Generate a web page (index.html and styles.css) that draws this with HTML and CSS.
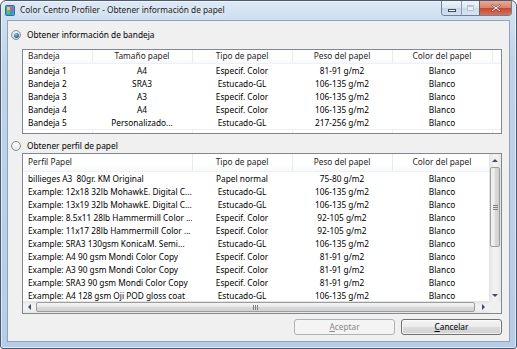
FILE: index.html
```html
<!DOCTYPE html>
<html lang="es">
<head>
  <meta charset="UTF-8" />
  <title>Color Centro Profiler - Obtener información de papel</title>
  <link rel="stylesheet" href="styles.css">
</head>
<body>
  <div class="window">
    <div class="titlebar">
      <svg class="app-icon" width="10" height="11" viewBox="0 0 10 11">
        <rect x="0.5" y="0.5" width="9" height="10" rx="1" fill="#4a9bc9" stroke="#2f6f96" />
        <rect x="2" y="2" width="6" height="7" fill="#e8f4fb" />
        <rect x="2" y="2" width="3" height="3" fill="#f2c94c" />
        <rect x="5" y="2" width="3" height="3" fill="#d9538f" />
        <rect x="2" y="5" width="3" height="4" fill="#5bbf6a" />
        <rect x="5" y="5" width="3" height="4" fill="#3d8fd6" />
      </svg>
      <span class="title">Color Centro Profiler - Obtener información de papel</span>
      <div class="caption-buttons">
        <span class="cap cap-min"><i></i></span>
        <span class="cap cap-max"><i></i></span>
        <span class="cap cap-close">
          <svg width="10" height="8" viewBox="0 0 10 8">
            <path d="M1.5 0.5 L5 3 L8.5 0.5 L9.5 1.5 L6.3 4 L9.5 6.5 L8.5 7.5 L5 5 L1.5 7.5 L0.5 6.5 L3.7 4 L0.5 1.5 Z" fill="#fff" stroke="#5a1a10" stroke-width="0.6" />
          </svg>
        </span>
      </div>
    </div>

    <div class="client">
      <label class="radio-row">
        <span class="radio checked"></span>Obtener información de bandeja
      </label>

      <div class="list list-trays">
        <table>
          <colgroup>
            <col class="c-tray"><col class="c-std"><col class="c-std"><col class="c-std"><col class="c-std"><col class="c-rest">
          </colgroup>
          <thead>
            <tr>
              <th class="left">Bandeja</th>
              <th>Tamaño papel</th>
              <th>Tipo de papel</th>
              <th>Peso del papel</th>
              <th>Color del papel</th>
              <th></th>
            </tr>
          </thead>
          <tbody>
            <tr><td class="left">Bandeja 1</td><td>A4</td><td>Especif. Color</td><td>81-91 g/m2</td><td>Blanco</td><td></td></tr>
            <tr><td class="left">Bandeja 2</td><td>SRA3</td><td>Estucado-GL</td><td>106-135 g/m2</td><td>Blanco</td><td></td></tr>
            <tr><td class="left">Bandeja 3</td><td>A3</td><td>Especif. Color</td><td>106-135 g/m2</td><td>Blanco</td><td></td></tr>
            <tr><td class="left">Bandeja 4</td><td>A4</td><td>Especif. Color</td><td>106-135 g/m2</td><td>Blanco</td><td></td></tr>
            <tr><td class="left">Bandeja 5</td><td>Personalizado...</td><td>Estucado-GL</td><td>217-256 g/m2</td><td>Blanco</td><td></td></tr>
            <tr class="filler"><td></td><td></td><td></td><td></td><td></td><td></td></tr>
          </tbody>
        </table>
      </div>

      <label class="radio-row second">
        <span class="radio"></span>Obtener perfil de papel
      </label>

      <div class="list list-profiles">
        <div class="list-main">
          <div class="view">
            <table>
              <colgroup>
                <col class="c-name"><col class="c-std"><col class="c-std"><col class="c-std"><col class="c-rest">
              </colgroup>
              <thead>
                <tr>
                  <th class="left">Perfil Papel</th>
                  <th>Tipo de papel</th>
                  <th>Peso del papel</th>
                  <th>Color del papel</th>
                  <th></th>
                </tr>
              </thead>
              <tbody>
                <tr><td class="left">billieges A3&nbsp; 80gr. KM Original</td><td>Papel normal</td><td>75-80 g/m2</td><td>Blanco</td><td></td></tr>
                <tr><td class="left">Example: 12x18 32lb MohawkE. Digital C...</td><td>Estucado-GL</td><td>106-135 g/m2</td><td>Blanco</td><td></td></tr>
                <tr><td class="left">Example: 13x19 32lb MohawkE. Digital C...</td><td>Estucado-GL</td><td>106-135 g/m2</td><td>Blanco</td><td></td></tr>
                <tr><td class="left">Example: 8.5x11 28lb Hammermill Color ...</td><td>Especif. Color</td><td>92-105 g/m2</td><td>Blanco</td><td></td></tr>
                <tr><td class="left">Example: 11x17 28lb Hammermill Color ...</td><td>Especif. Color</td><td>92-105 g/m2</td><td>Blanco</td><td></td></tr>
                <tr><td class="left">Example: SRA3 130gsm KonicaM. Semi...</td><td>Estucado-GL</td><td>106-135 g/m2</td><td>Blanco</td><td></td></tr>
                <tr><td class="left">Example: A4 90 gsm Mondi Color Copy</td><td>Especif. Color</td><td>81-91 g/m2</td><td>Blanco</td><td></td></tr>
                <tr><td class="left">Example: A3 90 gsm Mondi Color Copy</td><td>Especif. Color</td><td>81-91 g/m2</td><td>Blanco</td><td></td></tr>
                <tr><td class="left">Example: SRA3 90 gsm Mondi Color Copy</td><td>Especif. Color</td><td>81-91 g/m2</td><td>Blanco</td><td></td></tr>
                <tr><td class="left">Example: A4 128 gsm Oji POD gloss coat</td><td>Estucado-GL</td><td>106-135 g/m2</td><td>Blanco</td><td></td></tr>
              </tbody>
            </table>
          </div>
          <div class="vscroll">
            <span class="arrow up"></span>
            <div class="track">
              <div class="thumb"><span class="grip"></span></div>
            </div>
            <span class="arrow down"></span>
          </div>
        </div>
        <div class="hscroll-row">
          <div class="hscroll">
            <span class="arrow left"></span>
            <div class="track">
              <div class="thumb"><span class="grip"></span></div>
            </div>
            <span class="arrow right"></span>
          </div>
          <div class="corner"></div>
        </div>
      </div>

      <div class="buttons">
        <button class="btn" disabled><u>A</u>ceptar</button>
        <button class="btn"><u>C</u>ancelar</button>
      </div>
    </div>
  </div>
</body>
</html>
```

FILE: styles.css
```css
* {
  box-sizing: border-box;
}

body {
  margin: 0;
  background: #ffffff;
  font-family: "Noto Sans", "Liberation Sans", sans-serif;
  font-size: 8.3px;
  color: #000;
}

.window {
  width: 517px;
  height: 349px;
  border: 1px solid #4b5a6d;
  border-radius: 6px 6px 3px 3px;
  background: linear-gradient(180deg, #dde8f4 0px, #cfdff0 18px, #bfd4eb 60px, #b5cde8 100%);
  box-shadow: inset 0 0 0 1px rgba(255,255,255,0.55);
  overflow: hidden;
}

/* title bar */
.titlebar {
  height: 19px;
  display: flex;
  align-items: flex-start;
  padding-left: 4px;
}

.app-icon {
  margin-top: 4px;
  flex: none;
}

.title {
  margin-left: 5px;
  margin-top: 3px;
  line-height: 12px;
  color: #1b1b1b;
  white-space: nowrap;
  text-shadow: 0 0 6px rgba(255,255,255,0.9);
}

.caption-buttons {
  margin-left: auto;
  margin-right: 4px;
  display: flex;
  height: 15px;
  border: 1px solid #6f8098;
  border-top: none;
  border-radius: 0 0 4px 4px;
  overflow: hidden;
}

.cap {
  display: flex;
  align-items: center;
  justify-content: center;
  height: 100%;
}

.cap-min {
  width: 20px;
  border-right: 1px solid #8c9cb2;
  background: linear-gradient(180deg, #eef3f9 0%, #d9e4f1 50%, #c4d5e9 50%, #d3e1f0 100%);
}

.cap-min i {
  width: 8px;
  height: 3px;
  margin-top: 5px;
  background: #fff;
  border: 1px solid #3d4b5e;
}

.cap-max {
  width: 18px;
  border-right: 1px solid #7c5b5a;
  background: linear-gradient(180deg, #eef3f9 0%, #dde7f2 50%, #cbdaeb 50%, #d7e3f1 100%);
}

.cap-max i {
  width: 7px;
  height: 6px;
  border: 1px solid #b8c4d3;
  border-top-width: 2px;
  background: #e9eff6;
}

.cap-close {
  width: 31px;
  background: linear-gradient(180deg, #e9a99a 0%, #d9806c 50%, #c7472f 50%, #d7705a 100%);
}

/* client area */
.client {
  margin: 0 6px;
  width: 503px;
  height: 322px;
  border: 1px solid #8fa3bc;
  background: #f0f0f0;
  padding-top: 8px;
}

.radio-row {
  display: flex;
  align-items: center;
  height: 12px;
  padding-left: 3px;
  line-height: 12px;
  color: #000;
}

.radio-row.second {
  margin-top: 6px;
}

.radio {
  width: 10px;
  height: 10px;
  margin-right: 6px;
  border-radius: 50%;
  border: 1px solid #8b8f94;
  background: radial-gradient(circle at 50% 35%, #ffffff 0%, #eeeeee 55%, #d6d6d6 100%);
  display: flex;
  align-items: center;
  justify-content: center;
}

.radio.checked {
  background: radial-gradient(circle at 50% 35%, #f4f8fc 0%, #d9e3ee 60%, #b9c7d6 100%);
}

.radio.checked::after {
  content: "";
  width: 5px;
  height: 5px;
  border-radius: 50%;
  background: radial-gradient(circle at 40% 35%, #8fd0f5 0%, #2a6fa8 55%, #133f66 100%);
}

/* list views */
.list {
  width: 480px;
  margin-left: 14px;
  border: 1px solid #828790;
  background: #fff;
  overflow: hidden;
}

.list-trays {
  margin-top: 8px;
  height: 85px;
}

.list-profiles {
  margin-top: 1px;
  height: 161px;
}

.list table {
  border-collapse: collapse;
  table-layout: fixed;
}

.list-trays table {
  width: 478px;
  height: 83px;
}

.list th,
.list td {
  padding: 0 5px;
  font-weight: normal;
  text-align: center;
  white-space: nowrap;
  overflow: hidden;
  line-height: 13px;
  height: 13px;
}

.list .left {
  text-align: left;
}

.list th {
  color: #1e1e1e;
  background: linear-gradient(180deg, #ffffff 0%, #ffffff 60%, #f7f8fa 100%);
  border-right: 1px solid #e8ebee;
  border-bottom: 1px solid #eff1f3;
}

.list-trays th {
  height: 13px;
  line-height: 12px;
}

.list-profiles th {
  height: 17px;
  line-height: 16px;
}

.list th:last-child {
  border-right: none;
}

.list .filler td {
  height: auto;
  border-top: 1px solid #efefef;
  border-right: 1px solid #efefef;
}

col.c-tray { width: 69px; }
col.c-name { width: 169px; }
col.c-std  { width: 100px; }
col.c-rest { width: 9px; }

.list-main {
  display: flex;
  height: 147px;
}

.view {
  width: 466px;
  overflow: hidden;
}

.list-profiles table {
  width: 478px;
}

/* scroll bars */
.vscroll {
  width: 12px;
  display: flex;
  flex-direction: column;
  background: linear-gradient(90deg, #e3e3e3 0%, #f2f2f2 40%, #f2f2f2 60%, #e6e6e6 100%);
}

.vscroll .track {
  flex: 1;
  padding-top: 1px;
}

.vscroll .thumb {
  height: 80px;
  margin: 0 1px;
}

.hscroll-row {
  display: flex;
  height: 12px;
}

.hscroll {
  width: 466px;
  display: flex;
  background: linear-gradient(180deg, #e3e3e3 0%, #f2f2f2 40%, #f2f2f2 60%, #e6e6e6 100%);
}

.hscroll .track {
  flex: 1;
  padding-left: 1px;
}

.hscroll .thumb {
  width: 439px;
  height: 10px;
  margin-top: 1px;
}

.thumb {
  border: 1px solid #9c9c9c;
  border-radius: 2px;
  background: linear-gradient(90deg, #f4f4f4 0%, #e8e8e8 50%, #d9d9d9 51%, #d2d2d2 100%);
  display: flex;
  align-items: center;
  justify-content: center;
}

.hscroll .thumb {
  background: linear-gradient(180deg, #f4f4f4 0%, #e8e8e8 50%, #d9d9d9 51%, #d2d2d2 100%);
}

.vscroll .grip {
  width: 5px;
  height: 5px;
  background: repeating-linear-gradient(180deg, #7f7f7f 0px, #7f7f7f 1px, transparent 1px, transparent 2px);
}

.hscroll .grip {
  width: 5px;
  height: 5px;
  background: repeating-linear-gradient(90deg, #7f7f7f 0px, #7f7f7f 1px, transparent 1px, transparent 2px);
}

.corner {
  width: 12px;
  background: #f0f0f0;
}

.arrow {
  width: 12px;
  height: 12px;
  flex: none;
  display: flex;
  align-items: center;
  justify-content: center;
}

.arrow::after {
  content: "";
  width: 0;
  height: 0;
  border: 3px solid transparent;
}

.arrow.up::after    { border-bottom-color: #3f4b5e; border-top-width: 0; }
.arrow.down::after  { border-top-color: #3f4b5e; border-bottom-width: 0; }
.arrow.left::after  { border-right-color: #3f4b5e; border-left-width: 0; }
.arrow.right::after { border-left-color: #3f4b5e; border-right-width: 0; }

/* buttons */
.buttons {
  width: 480px;
  margin: 5px 0 0 14px;
  display: flex;
  justify-content: flex-end;
  gap: 6px;
}

.btn {
  width: 101px;
  height: 16px;
  padding: 0;
  font-family: inherit;
  font-size: 8.3px;
  line-height: 14px;
  color: #000;
  border: 1px solid #707070;
  border-radius: 3px;
  background: linear-gradient(180deg, #f3f3f3 0%, #ececec 50%, #dddddd 50%, #d0d0d0 100%);
  box-shadow: inset 0 0 0 1px rgba(255,255,255,0.7);
}

.btn:disabled {
  color: #8a8a8a;
  border-color: #adb2b5;
  background: #f4f4f4;
  box-shadow: none;
}

.btn u {
  text-decoration-thickness: 1px;
}
```
